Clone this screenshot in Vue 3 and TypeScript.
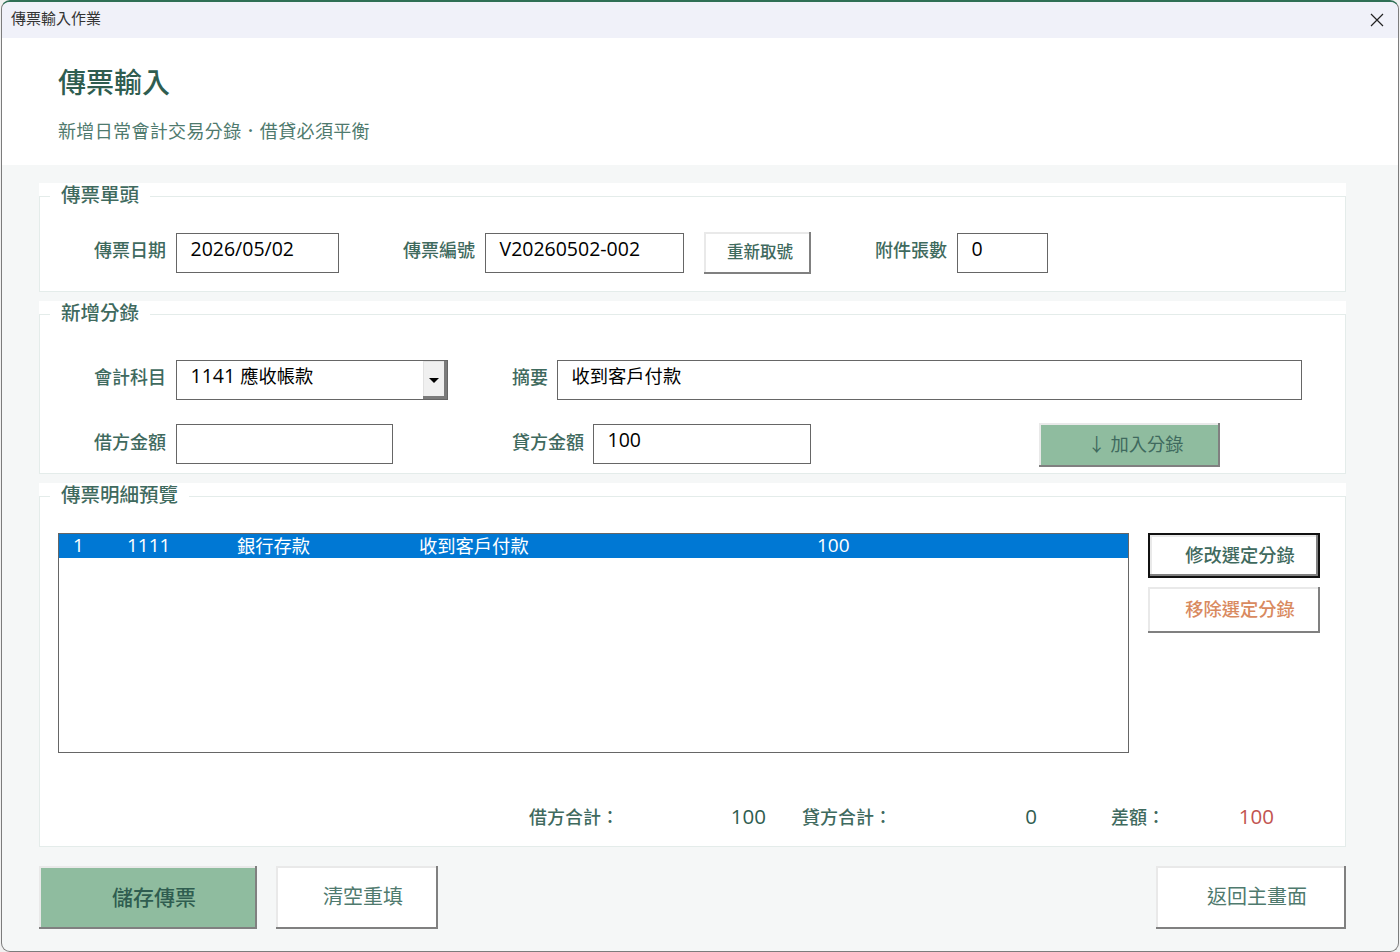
<script setup lang="ts">
interface Entry {
  no: number;
  code: string;
  account: string;
  memo: string;
  debit: string;
  credit: string;
}

const entries: Entry[] = [
  { no: 1, code: '1111', account: '銀行存款', memo: '收到客戶付款', debit: '100', credit: '' }
];

const selectedNo = 1;
</script>

<template>
  <div class="window">
    <div class="titlebar">
      <span class="title-text">傳票輸入作業</span>
      <svg class="close" viewBox="0 0 14 14" width="14" height="14">
        <path d="M1 1l12 12M13 1L1 13" fill="none" stroke="#222" stroke-width="1.2" />
      </svg>
    </div>

    <header class="head">
      <h1>傳票輸入</h1>
      <p>新增日常會計交易分錄．借貸必須平衡</p>
    </header>

    <main class="main">
      <div class="panel">
        <fieldset class="group group-head">
          <legend>傳票單頭</legend>
          <div class="row">
            <label class="lbl">傳票日期</label>
            <div class="field w-date">2026/05/02</div>
            <label class="lbl gap-64">傳票編號</label>
            <div class="field w-no">V20260502-002</div>
            <button class="btn btn-small">重新取號</button>
            <label class="lbl gap-64">附件張數</label>
            <div class="field w-att">0</div>
          </div>
        </fieldset>
      </div>

      <div class="panel">
        <fieldset class="group group-entry">
          <legend>新增分錄</legend>
          <div class="row">
            <label class="lbl">會計科目</label>
            <div class="field combo">
              <span class="combo-text">1141 <span class="cjk">應收帳款</span></span>
              <span class="combo-btn"><i class="arrow"></i></span>
            </div>
            <label class="lbl lbl-short">摘要</label>
            <div class="field w-memo"><span class="cjk">收到客戶付款</span></div>
          </div>
          <div class="row row-two">
            <label class="lbl">借方金額</label>
            <div class="field w-debit"></div>
            <label class="lbl gap-119">貸方金額</label>
            <div class="field w-credit">100</div>
            <button class="btn btn-add">↓ 加入分錄</button>
          </div>
        </fieldset>
      </div>

      <div class="panel">
        <fieldset class="group group-list">
          <legend>傳票明細預覽</legend>
          <div class="list-wrap">
            <div class="list">
              <div
                v-for="e in entries"
                :key="e.no"
                class="list-row"
                :class="{ selected: e.no === selectedNo }"
              >
                <span class="c-no">{{ e.no }}</span>
                <span class="c-code">{{ e.code }}</span>
                <span class="c-acc cjk">{{ e.account }}</span>
                <span class="c-memo cjk">{{ e.memo }}</span>
                <span class="c-debit">{{ e.debit }}</span>
                <span>{{ e.credit }}</span>
              </div>
            </div>
            <div class="side">
              <button class="btn btn-default">修改選定分錄</button>
              <button class="btn btn-remove">移除選定分錄</button>
            </div>
          </div>
          <div class="totals">
            <div class="total t-debit"><span>借方合計：</span><b>100</b></div>
            <div class="total t-credit"><span>貸方合計：</span><b>0</b></div>
            <div class="total t-diff"><span>差額：</span><b class="red">100</b></div>
          </div>
        </fieldset>
      </div>

      <div class="footer">
        <button class="btn btn-save">儲存傳票</button>
        <button class="btn btn-clear">清空重填</button>
        <button class="btn btn-back">返回主畫面</button>
      </div>
    </main>
  </div>
</template>

<style>
html,
body {
  margin: 0;
  background: #f1f1f1;
}
</style>

<style scoped>
.window {
  box-sizing: border-box;
  width: 1398px;
  height: 952px;
  margin-left: 1px;
  display: flex;
  flex-direction: column;
  border: 1px solid #7c7c7c;
  border-top: 2px solid #2f6f55;
  border-radius: 9px;
  overflow: hidden;
  background: #f5f7f7;
  color: #3f6a5e;
  font-family: "Open Sans", "Noto Sans CJK TC", sans-serif;
}

.titlebar {
  box-sizing: border-box;
  height: 36px;
  flex-shrink: 0;
  display: flex;
  align-items: center;
  justify-content: space-between;
  padding: 0 14px 0 9px;
  background: #f0f1f9;
}

.title-text {
  margin-bottom: 6px;
  font-size: 15px;
  color: #333;
}

.close {
  display: block;
}

.head {
  height: 127px;
  flex-shrink: 0;
  box-sizing: border-box;
  padding: 23px 0 0 56px;
  background: #fff;
}

.head h1 {
  margin: 0;
  font-size: 28px;
  line-height: 42px;
  font-weight: 500;
  color: #2f5d50;
}

.head p {
  margin: 15px 0 0;
  font-size: 18px;
  line-height: 26px;
  letter-spacing: 0.35px;
  color: #4f7a6e;
}

.main {
  flex: 1;
  padding: 18px 52px 0 37px;
  display: flex;
  flex-direction: column;
  gap: 9px;
}

.panel {
  background: #fff;
}

.group {
  margin: 0;
  border: 1px solid #e4ecea;
  padding: 0;
  min-width: 0;
}

.group legend {
  margin-left: 10px;
  padding: 0 11px 2px;
  font-size: 19.5px;
  line-height: 24px;
  font-weight: 500;
  color: #3f6a5e;
}

.group-head {
  padding-top: 23px;
  padding-bottom: 17px;
}

.group-entry {
  padding-top: 33px;
  padding-bottom: 6px;
}

.group-list {
  padding-top: 24px;
  padding-bottom: 15px;
}

.row {
  margin-left: 54px;
  display: flex;
  align-items: center;
}

.row-two {
  margin-top: 23px;
  height: 44px;
}

.row-two .field {
  margin-bottom: 2px;
}

.lbl {
  width: 72px;
  margin-right: 10px;
  margin-bottom: 8px;
  flex-shrink: 0;
  font-size: 18px;
  font-weight: 500;
  text-align: right;
  white-space: nowrap;
}

.lbl-short {
  width: 36px;
  margin-left: 64px;
  margin-right: 9px;
}

.gap-64 {
  margin-left: 64px;
}

.gap-119 {
  margin-left: 119px;
  margin-right: 9px;
}

.field {
  box-sizing: border-box;
  height: 40px;
  flex-shrink: 0;
  padding: 0 13.5px;
  border: 1px solid #666;
  background: #fff;
  color: #000;
  font-size: 19.5px;
  line-height: 29px;
}

.cjk {
  font-size: 18.3px;
}

.w-date {
  width: 163px;
}

.w-no {
  width: 199px;
}

.w-att {
  width: 91px;
}

.w-memo {
  width: 745px;
}

.w-debit {
  width: 217px;
}

.w-credit {
  width: 218px;
}

.combo {
  width: 272px;
  padding: 0;
  display: flex;
}

.combo-text {
  flex: 1;
  padding-left: 13.5px;
}

.combo-btn {
  box-sizing: border-box;
  width: 24px;
  display: flex;
  align-items: center;
  justify-content: center;
  background: #f0f0f0;
  box-shadow: inset -3px -3px 0 #7b7b7b, inset 1px 1px 0 #e2e2e2;
}

.arrow {
  display: block;
  margin: 0 2px 0 0;
  width: 0;
  height: 0;
  border-left: 5.5px solid transparent;
  border-right: 5.5px solid transparent;
  border-top: 5px solid #000;
}

.btn {
  box-sizing: border-box;
  flex-shrink: 0;
  padding: 0 0 4px 12px;
  border: 0;
  background: #fff;
  color: #3f6a5e;
  font-family: inherit;
  font-weight: 500;
  box-shadow: inset -2px -2px 0 #808080, inset 2px 2px 0 #e9e9e9;
}

.btn-small {
  width: 107px;
  height: 42px;
  margin-left: 20px;
  font-size: 16.5px;
  padding-left: 5px;
}

.btn-add {
  width: 181px;
  height: 44px;
  margin-left: 228px;
  background: #8fbc9f;
  font-size: 18.3px;
  font-weight: 400;
}

.list-wrap {
  margin-left: 18px;
  display: flex;
  gap: 19px;
}

.list {
  box-sizing: border-box;
  width: 1071px;
  height: 220px;
  border: 1px solid #666;
  background: #fff;
}

.list-row {
  box-sizing: border-box;
  height: 24px;
  padding: 0 0 3px 14px;
  display: flex;
  align-items: center;
  font-size: 19px;
  color: #000;
  white-space: nowrap;
}

.list-row.selected {
  background: #0078d4;
  color: #fff;
}

.c-no {
  width: 54px;
}

.c-code {
  width: 110px;
}

.c-acc {
  width: 182px;
}

.c-memo {
  width: 398px;
}

.c-debit {
  width: 100px;
}

.side {
  width: 172px;
  display: flex;
  flex-direction: column;
  gap: 9px;
}

.btn-default {
  height: 45px;
  font-size: 18.3px;
  box-shadow: inset 0 0 0 2px #111, inset -4px -4px 0 #808080, inset 4px 4px 0 #e9e9e9;
}

.btn-remove {
  height: 46px;
  font-size: 18.3px;
  color: #d98a5f;
}

.totals {
  margin-top: 49px;
  margin-bottom: 1px;
  height: 28px;
  margin-left: 489px;
  display: flex;
  align-items: center;
}

.total {
  display: flex;
  justify-content: space-between;
  align-items: center;
  font-size: 18px;
  font-weight: 500;
}

.total b {
  font-size: 20.5px;
  font-weight: 400;
  color: #2f5d50;
}

.total b.red {
  color: #c25450;
}

.t-debit {
  width: 237px;
}

.t-credit {
  width: 235px;
  margin-left: 36px;
}

.t-diff {
  width: 163px;
  margin-left: 74px;
}

.footer {
  margin-top: 10px;
  display: flex;
  height: 63px;
}

.footer .btn {
  font-size: 20px;
  font-weight: 400;
  color: #4f7a6e;
  height: 63px;
}

.footer .btn-save {
  width: 218px;
  background: #8fbc9f;
  font-size: 21px;
  font-weight: 500;
  color: #2f5d50;
}

.footer .btn-clear {
  width: 162px;
  margin-left: 19px;
}

.footer .btn-back {
  width: 190px;
  margin-left: auto;
}
</style>
